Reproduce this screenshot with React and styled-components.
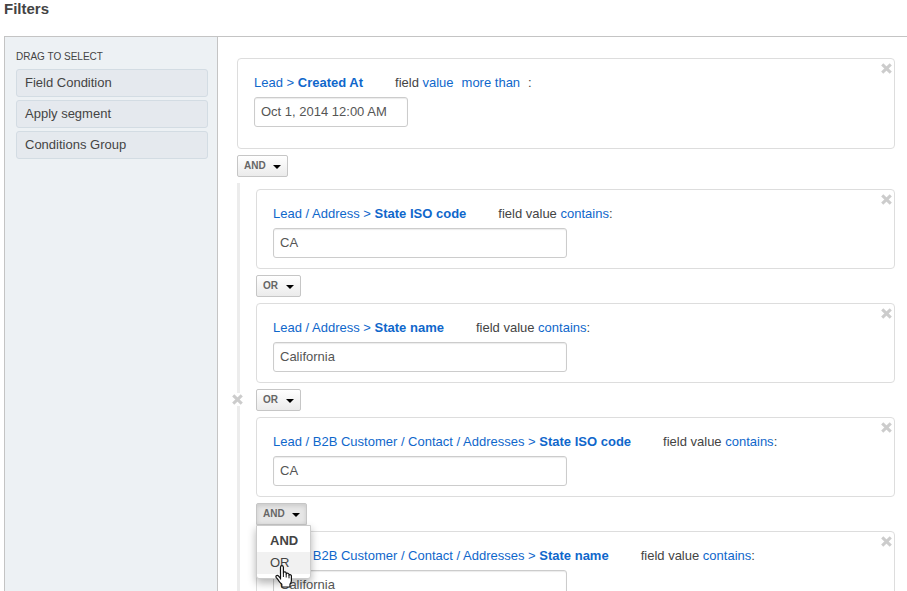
import React from "react";
import styled, { createGlobalStyle, css } from "styled-components";

const GlobalStyle = createGlobalStyle`
  *, *::before, *::after { box-sizing: border-box; }
  body {
    margin: 0;
    background: #fff;
    color: #444;
    font: 13px/20px "Liberation Sans", Arial, sans-serif;
  }
  button, input { font: inherit; color: inherit; margin: 0; }
`;

const Page = styled.main`
  display: flex;
  flex-direction: column;
  height: 100vh;
  padding-left: 4px;
  overflow: hidden;
`;

const Title = styled.h1`
  flex: none;
  margin: 0 0 18px;
  font-size: 15px;
  line-height: 18px;
  font-weight: bold;
`;

const Builder = styled.section`
  flex: 1;
  min-height: 0;
  display: flex;
  border-top: 1px solid #c4c4c4;
  border-left: 1px solid #c4c4c4;
`;

const Sidebar = styled.aside`
  flex: none;
  width: 213px;
  padding: 10px 9px 0 11px;
  background: #edf1f4;
  border-right: 1px solid #c4c4c4;
`;

const SidebarLabel = styled.h2`
  margin: 0 0 2px;
  font-size: 10px;
  line-height: 20px;
  font-weight: normal;
  text-transform: uppercase;
`;

const SourceList = styled.ul`
  display: flex;
  flex-direction: column;
  gap: 3px;
  margin: 0;
  padding: 0;
  list-style: none;
`;

const SourceItem = styled.li`
  height: 28px;
  padding: 0 8px;
  line-height: 26px;
  background: #e5e9ee;
  border: 1px solid #d3dce3;
  border-radius: 3px;
  cursor: move;
`;

const Conditions = styled.div`
  flex: 1;
  min-width: 0;
  display: flex;
  flex-direction: column;
  gap: 6px;
  padding: 21px 12px 0 19px;
`;

const Card = styled.article`
  position: relative;
  flex: none;
  padding: 14px 16px ${(p) => (p.$roomy ? 21 : 10)}px;
  background: #fff;
  border: 1px solid #ddd;
  border-radius: 4px;
`;

const Sentence = styled.div`
  display: flex;
  gap: 32px;
  margin-bottom: 4px;
  white-space: nowrap;
`;

const Criterion = styled.span`
  display: flex;
  gap: ${(p) => (p.$wide ? 8 : 0)}px;
`;

const Link = styled.a`
  color: #0f67cb;
  text-decoration: none;
`;

const ValueInput = styled.input`
  display: block;
  width: ${(p) => (p.$short ? 154 : 294)}px;
  height: 30px;
  padding: 0 6px 2px;
  color: #555;
  background: #fff;
  border: 1px solid #ccc;
  border-radius: 3px;
  box-shadow: inset 0 1px 1px rgba(0, 0, 0, 0.08);
  outline: none;
`;

const closePlacement = {
  card: css`top: 3px; right: 2px;`,
  group: css`top: 50%; left: -8px; margin-top: -7px; background: #fff;`,
};

const CloseButton = styled.button`
  position: absolute;
  display: flex;
  align-items: center;
  justify-content: center;
  width: 11px;
  height: 13px;
  padding: 0;
  color: #ccc;
  background: none;
  border: 0;
  cursor: pointer;
  ${(p) => closePlacement[p.$place]}
`;

const Group = styled.div`
  position: relative;
  flex: none;
  display: flex;
  flex-direction: column;
  gap: 6px;
  padding: 6px 0 6px 16px;
  border-left: 3px solid #ececec;
`;

const OperatorWrap = styled.div`
  position: relative;
  align-self: flex-start;
`;

const OperatorButton = styled.button`
  display: flex;
  align-items: center;
  justify-content: space-between;
  gap: 7px;
  min-width: 45px;
  height: 22px;
  padding: 0 6px;
  font-size: 10px;
  line-height: 20px;
  font-weight: bold;
  color: #666;
  background: ${(p) => (p.$open ? "#e6e6e6" : "linear-gradient(#fff, #ebebeb)")};
  border: 1px solid #c6c6c6;
  border-radius: ${(p) => (p.$open ? "2px 2px 0 0" : "2px")};
  box-shadow: ${(p) => (p.$open ? "inset 0 2px 4px rgba(0, 0, 0, 0.12)" : "none")};
`;

const Caret = styled.span`
  width: 8px;
  margin-top: 2px;
  border: 4px solid transparent;
  border-top-color: #000;
  border-bottom: 0;
`;

const Menu = styled.ul`
  position: absolute;
  z-index: 2;
  top: 100%;
  left: 0;
  margin: 0;
  padding: 4px 0;
  list-style: none;
  background: #fff;
  border: 1px solid #ccc;
  border-radius: 0 0 3px 3px;
  box-shadow: 0 4px 8px rgba(0, 0, 0, 0.3);
`;

const MenuItem = styled.button`
  display: block;
  width: 100%;
  height: 22px;
  padding: 0 12px 0 13px;
  line-height: 22px;
  text-align: left;
  font-weight: ${(p) => (p.$selected ? "bold" : "normal")};
  background: ${(p) => (p.$hovered ? "#f1f1f1" : "transparent")};
  border: 0;
`;

const Pointer = styled.svg`
  position: absolute;
  z-index: 3;
  top: 62px;
  left: 19px;
`;

function CrossIcon() {
  return (
    <svg width="11" height="11" viewBox="0 0 11 11" aria-hidden="true">
      <path
        d="M2.3 2.4 8.7 8.6M8.7 2.4 2.3 8.6"
        stroke="currentColor"
        strokeWidth="3"
        strokeLinecap="square"
      />
    </svg>
  );
}

function HandPointer() {
  return (
    <Pointer width="18" height="23" viewBox="0 0 18 23" aria-hidden="true">
      <path
        d="M5.5 14.5V2.2Q5.5.6 6.9.6T8.4 2.2V8Q8.7 6.6 10 6.9T11.2 8.5V9Q11.7 7.8 12.9 8.2T14 9.7V10.3Q14.6 9.2 15.6 9.8T16.4 11.5V15.5Q16.4 17.5 15 19.2V22H6.8V19.3Q4.2 16.9 3.2 14.9L1.1 12.3Q.6 10.9 1.7 10.5T3.8 11.3L5.5 13.3"
        fill="#fff"
        stroke="#111"
        strokeWidth="1.2"
        strokeLinejoin="round"
      />
      <path d="M8.4 8v4M11.2 9v3.5M14 10.3v3" fill="none" stroke="#111" strokeWidth="1" />
    </Pointer>
  );
}

function Operator({ value, open }) {
  return (
    <OperatorWrap>
      <OperatorButton type="button" aria-haspopup="menu" aria-expanded={!!open} $open={open}>
        {value}
        <Caret />
      </OperatorButton>
      {open && (
        <>
          <Menu role="menu">
            {["AND", "OR"].map((name) => (
              <li key={name} role="none">
                <MenuItem type="button" role="menuitem" $selected={name === value} $hovered={name !== value}>
                  {name}
                </MenuItem>
              </li>
            ))}
          </Menu>
          <HandPointer />
        </>
      )}
    </OperatorWrap>
  );
}

function Condition({ path, field, value, date }) {
  return (
    <Card $roomy={date}>
      <CloseButton type="button" aria-label="Remove condition" $place="card">
        <CrossIcon />
      </CloseButton>
      <Sentence>
        <Link href="#field">
          {path} &gt; <b>{field}</b>
        </Link>
        {date ? (
          <Criterion $wide>
            <span>
              field <Link href="#part">value</Link>
            </span>
            <Link href="#operator">more than</Link>
            <span>:</span>
          </Criterion>
        ) : (
          <Criterion>
            <span>
              field value <Link href="#operator">contains</Link>:
            </span>
          </Criterion>
        )}
      </Sentence>
      <ValueInput type="text" aria-label={`${path} ${field}`} defaultValue={value} $short={date} />
    </Card>
  );
}

const conditions = [
  { path: "Lead / Address", field: "State ISO code", value: "CA", next: "OR" },
  { path: "Lead / Address", field: "State name", value: "California", next: "OR" },
  { path: "Lead / B2B Customer / Contact / Addresses", field: "State ISO code", value: "CA", next: "AND", open: true },
  { path: "Lead / B2B Customer / Contact / Addresses", field: "State name", value: "California" },
];

export default function App() {
  return (
    <>
      <GlobalStyle />
      <Page>
        <Title>Filters</Title>
        <Builder>
          <Sidebar>
            <SidebarLabel>Drag to select</SidebarLabel>
            <SourceList>
              <SourceItem>Field Condition</SourceItem>
              <SourceItem>Apply segment</SourceItem>
              <SourceItem>Conditions Group</SourceItem>
            </SourceList>
          </Sidebar>
          <Conditions>
            <Condition path="Lead" field="Created At" value="Oct 1, 2014 12:00 AM" date />
            <Operator value="AND" />
            <Group>
              {conditions.map(({ next, open, ...condition }, index) => (
                <React.Fragment key={index}>
                  <Condition {...condition} />
                  {next && <Operator value={next} open={open} />}
                </React.Fragment>
              ))}
              <CloseButton type="button" aria-label="Remove group" $place="group">
                <CrossIcon />
              </CloseButton>
            </Group>
          </Conditions>
        </Builder>
      </Page>
    </>
  );
}
